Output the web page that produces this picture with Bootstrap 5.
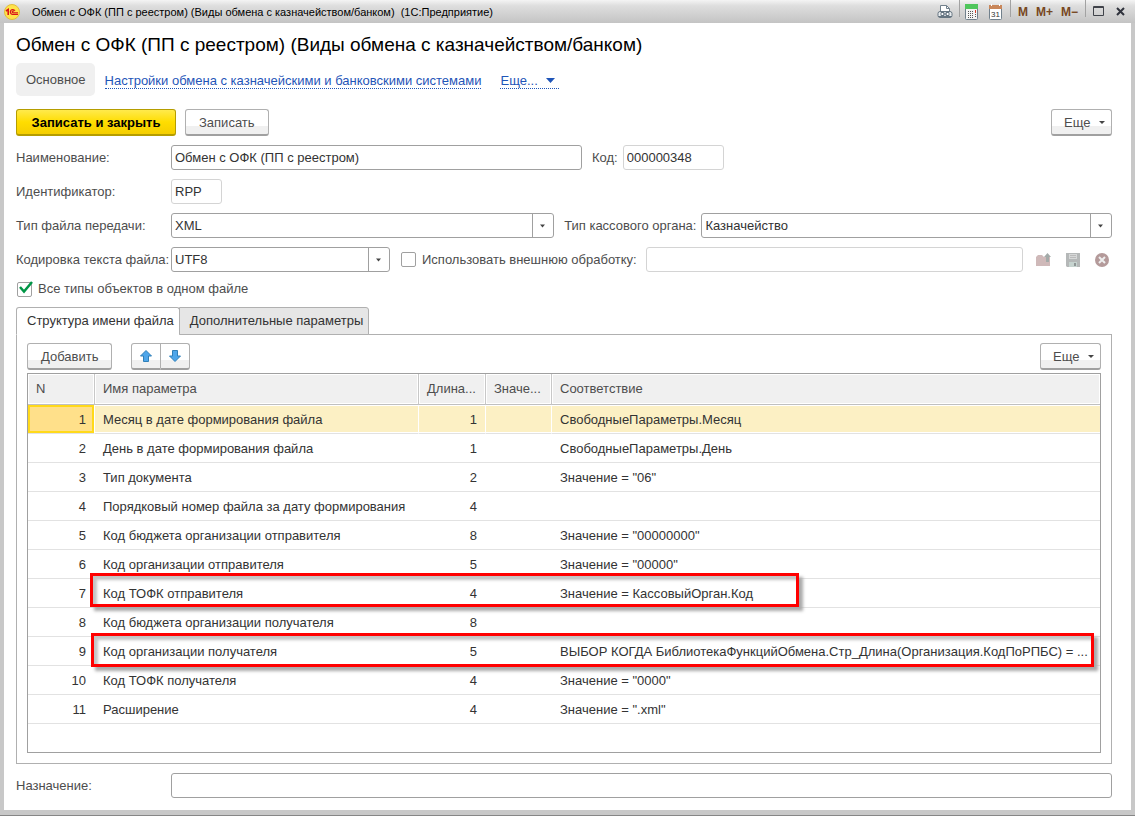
<!DOCTYPE html>
<html lang="ru">
<head>
<meta charset="utf-8">
<meta name="viewport" content="width=device-width, initial-scale=1">
<title>Обмен с ОФК (ПП с реестром)</title>
<link href="https://cdn.jsdelivr.net/npm/bootstrap@5.3.0/dist/css/bootstrap.min.css" rel="stylesheet">
<style>
body{font:13px/16px "Liberation Sans",Arial,sans-serif;color:#4d4d4d;background:#c8c8c8}
.app-window{padding:0 4px 5px;border-bottom:1px solid #868686}
.title-bar{height:23px;margin:0 -4px;padding:0 10px 0 4px;color:#000;font-size:11px;background:linear-gradient(#f4f4f4,#dedede 25%,#c4c4c4)}
.title-bar button{border:0;background:none;padding:0;display:flex;align-items:center}
.title-bar svg,.icon-btn svg,.move svg{display:block}
.title-bar .mem{font-weight:700;font-size:12px;color:#774721}
.title-bar .sep{width:1px;height:17px;background:#a2a2a2;align-self:flex-start;margin:0 7px}
.title-bar .sep-tight{margin:0 3px 0 6px}
.mem-set{gap:8px}
.form-page{background:#fff;padding:10px 19px 12px 12px}
.page-title{font-size:19px;line-height:24px;color:#000;margin:0 0 6px}
.nav-pill{background:#f0f0f0;border-radius:5px;color:#4d4d4d;padding:9px 9px 8px 10px;text-decoration:none}
.nav-ref{color:#1f55b8;text-decoration:none;border-bottom:1px dotted #1f55b8;line-height:15px;margin:2px 9px 0 10px}
.commands{margin-top:13px;gap:9px}
.cmd{height:27px;font-size:13px;line-height:16px;padding:1px 13px 0;color:#4d4d4d;border:1px solid #b0b0b0;border-bottom:2px solid #a0a0a0;border-radius:3px;background:linear-gradient(#fff 65%,#f0f0f0 66%)}
.cmd:hover{border-color:#a0a0a0;color:#333}
.cmd-main{min-width:160px;font-weight:700;color:#000;border-color:#b59d00;background:linear-gradient(#ffea4d,#ffdd00 50%,#f5ce00)}
.cmd-more{min-width:61px;padding:1px 6px 0 12px;display:flex;align-items:center;justify-content:space-between}
.form-fields{gap:9px;margin-top:9px}
.lbl{flex:0 0 155px;white-space:nowrap}
.gap-lbl{margin:0 5px 0 10px;white-space:nowrap}
.field{height:25px;min-width:0;padding:0 3px;border:1px solid #a0a0a0;border-radius:3px;color:#333;background-color:#fff}
.field.soft{border-color:#d4d4d4}
.field-name{flex:0 1 411px}
.field-code{width:101px}
.field-id{width:51px}
.field-enc{width:219px}
.combo{appearance:none;background:url("data:image/svg+xml,%3Csvg xmlns='http://www.w3.org/2000/svg' width='21' height='23'%3E%3Cpath d='M.5 0v23' stroke='%23a0a0a0'/%3E%3Cpath d='M8 10.500h5l-2.500 3z' fill='%23444'/%3E%3C/svg%3E") right center no-repeat #fff}
.grow-a{flex:383 1 0}
.grow-b{flex:411 1 0}
.tick{appearance:none;width:15px;height:15px;flex:none;margin:0;border:1px solid #a0a0a0;border-radius:2px;background:#fff}
.tick-ext{margin-left:11px}
.tick-lbl{margin:0 9px 0 6px;white-space:nowrap}
.tick-cell{position:relative;display:flex;margin:0 6px 0 1px}
.tick-cell svg{position:absolute;left:2px;top:-2px;pointer-events:none}
.all-types{margin:9px 0 10px}
.file-tools{gap:15px;margin:0 3px 0 13px}
.icon-btn{border:0;background:none;padding:0}
.page-tabs{margin-bottom:-1px;position:relative}
.page-tabs button{height:28px;padding:0 5px 0 10px;border:1px solid #b0b0b0;background:#e6e6e6;color:#333;border-top-right-radius:3px;margin-left:-1px}
.page-tabs button.active{background:#fff;border-bottom-color:#fff;margin-left:0;border-radius:3px 3px 0 0}
.tab-panel{border:1px solid #b0b0b0;padding:8px 10px 10px}
.grid-tools{margin-bottom:3px}
.move{margin-left:19px}
.move .cmd{padding:0 8px}
.grid-box{border:1px solid #a0a0a0;min-height:360px}
.params{width:100%;table-layout:fixed;border-collapse:separate;border-spacing:0;color:#333}
.params th{height:31px;padding:0 8px;font-weight:400;color:#4d4d4d;background:#f0f0f0;border-right:1px solid #c8c8c8;border-bottom:1px solid #c0c0c0;box-shadow:inset 0 0 0 1px #fff;overflow:hidden;white-space:nowrap;text-overflow:ellipsis}
.params th:last-child{border-right:0}
.params td{height:29px;padding:2px 8px 0;border-bottom:1px solid #e2e2e2;white-space:nowrap}
.params td:last-child{overflow:hidden;text-overflow:ellipsis}
.params tr{position:relative}
.params .current td{background:#fcf0c4;border-right:1px solid #fff;box-shadow:inset 0 1px #fff,inset 0 -1px #fff}
.params .current td:first-child{background:#ffe08a;box-shadow:inset 0 0 0 2px #ffd91a}
.params .current td:last-child{border-right:0}
.params td.num{padding-right:9px}
.params .current td.num{padding-right:8px}
.frame{position:absolute;border:3px solid #f00;box-shadow:4px 4px 3px #aaa,inset 4px 4px 3px #c4c4c4;pointer-events:none}
.frame-short{left:62px;right:301px;top:-6px;bottom:1px}
.frame-long{left:63px;right:6px;top:-4px;bottom:-1px}
.purpose{margin-top:9px}
</style>
</head>
<body>
<div class="app-window min-vh-100 d-flex flex-column">
<header class="title-bar d-flex align-items-center">
  <svg width="16" height="16" viewBox="0 0 16 16"><circle cx="8" cy="8" r="7.500" fill="#ffe34a" stroke="#e2bd3c"/><path d="M2 7l2.200-1.500v5.500" fill="none" stroke="#d8151a" stroke-width="1.600"/><path d="M11 6.800a2.500 2.500 0 1 0-2.500 3.700H14M10 7.300a1 1 0 1 0-1.200 1.500H14" fill="none" stroke="#d8151a" stroke-width="1.200"/></svg>
  <span class="ms-2 ps-1 me-auto text-truncate">Обмен с ОФК (ПП с реестром) (Виды обмена с казначейством/банком)&nbsp; (1С:Предприятие)</span>
  <button aria-label="Печать"><svg width="16" height="16" viewBox="0 0 16 16"><path d="M3.500 8V1.500h6l3 3V8" fill="#fff" stroke="#71808c"/><path d="M9.500 1.500v3h3" fill="none" stroke="#71808c"/><rect x="1" y="7.500" width="14" height="6" rx="2" fill="#e9edf0" stroke="#667581"/><path d="M4 8.500h3v3H4zM9 8.500h3v3H9zM1 12.500h14M6 10h4" fill="#fff" stroke="#667581"/></svg></button>
  <span class="sep sep-tight"></span>
  <button aria-label="Калькулятор"><svg width="16" height="16" viewBox="0 0 16 16"><rect x="2.500" y=".5" width="12" height="15" rx="1" fill="#f4f4f4" stroke="#71808c"/><path d="M2 0h13v5H2z" fill="#4fc65c"/><path d="M5 7.500h6M5 9.500h6M5 11.500h6M5 13.500h6" stroke="#555" stroke-dasharray="1 1"/><path d="M12.500 6v3" stroke="#d8432e"/><path d="M12.500 10v4" stroke="#555" stroke-dasharray="1 1"/></svg></button>
  <button class="ms-2" aria-label="Календарь"><svg width="16" height="16" viewBox="0 0 16 16"><rect x="2.500" y="1.500" width="12" height="14" rx="1" fill="#fff" stroke="#71808c"/><path d="M2 1h13v4H2z" fill="#c9875b"/><path d="M4.500 0v2M12.500 0v2" stroke="#fff"/><text x="8.500" y="13" font-size="8" text-anchor="middle" fill="#333">31</text></svg></button>
  <span class="sep"></span>
  <span class="mem-set d-flex"><button class="mem">M</button><button class="mem">M+</button><button class="mem">M−</button></span>
  <span class="sep"></span>
  <button aria-label="Развернуть"><svg width="11" height="11" viewBox="0 0 11 11"><path d="M.5 .5h10v9H.5zM1 1.500h9" fill="none" stroke="#40434a"/></svg></button>
  <button class="ms-2 ps-1" aria-label="Закрыть"><svg width="9" height="9" viewBox="0 0 9 9"><path d="M1 1l7 7M8 1L1 8" stroke="#30333d" stroke-width="2"/></svg></button>
</header>

<main class="form-page flex-grow-1 d-flex flex-column">
  <h1 class="page-title">Обмен с ОФК (ПП с реестром) (Виды обмена с казначейством/банком)</h1>
  <nav class="d-flex align-items-center">
    <a class="nav-pill" href="#">Основное</a>
    <a class="nav-ref" href="#">Настройки обмена с казначейскими и банковскими системами</a>
    <a class="nav-ref" href="#">Еще... <svg class="ms-1" width="14" height="10" viewBox="0 0 14 10"><path d="M1 2h9L5.500 7z" fill="#1f55b8"/></svg></a>
  </nav>
  <div class="commands d-flex">
    <button class="cmd cmd-main">Записать и закрыть</button>
    <button class="cmd">Записать</button>
    <button class="cmd cmd-more ms-auto">Еще <svg width="6" height="4" viewBox="0 0 6 4"><path d="M0 0h6L3 3z" fill="#444"/></svg></button>
  </div>

  <div class="form-fields d-grid">
    <div class="d-flex align-items-center">
      <label class="lbl" for="f-name">Наименование:</label>
      <input class="field field-name" id="f-name" value="Обмен с ОФК (ПП с реестром)">
      <label class="gap-lbl" for="f-code">Код:</label>
      <input class="field soft field-code" id="f-code" value="000000348">
    </div>
    <div class="d-flex align-items-center">
      <label class="lbl" for="f-id">Идентификатор:</label>
      <input class="field soft field-id" id="f-id" value="RPP">
    </div>
    <div class="d-flex align-items-center">
      <label class="lbl" for="f-type">Тип файла передачи:</label>
      <select class="field combo grow-a" id="f-type"><option>XML</option></select>
      <label class="gap-lbl" for="f-organ">Тип кассового органа:</label>
      <select class="field combo grow-b" id="f-organ"><option>Казначейство</option></select>
    </div>
    <div class="d-flex align-items-center">
      <label class="lbl" for="f-enc">Кодировка текста файла:</label>
      <select class="field combo field-enc" id="f-enc"><option>UTF8</option></select>
      <input class="tick tick-ext" type="checkbox" id="f-ext">
      <label class="tick-lbl" for="f-ext">Использовать внешнюю обработку:</label>
      <input class="field soft flex-grow-1" id="f-extname" aria-label="Внешняя обработка" disabled>
      <div class="file-tools d-flex">
        <button class="icon-btn" aria-label="Загрузить" disabled><svg width="15" height="14" viewBox="0 0 15 14"><path d="M0 4l2-2h4l2 2h6v9H0z" fill="#cfb9b9"/><path d="M11.500 0L15 4h-2v5h-3V4H8z" fill="#a3aaa8"/></svg></button>
        <button class="icon-btn" aria-label="Сохранить" disabled><svg width="14" height="14" viewBox="0 0 14 14"><path d="M0 0h14v14H1l-1-1z" fill="#b5b8b8"/><path d="M3 1h8v5H3z" fill="#d6d8d8"/><path d="M4 2.500h6M4 4.500h6" stroke="#bbb"/><path d="M3 9h8v5H3z" fill="#c6d3cf"/><path d="M8 10h2v3H8z" fill="#8f9696"/></svg></button>
        <button class="icon-btn" aria-label="Очистить" disabled><svg width="14" height="14" viewBox="0 0 14 14"><circle cx="7" cy="7" r="7" fill="#b49a9a"/><path d="M4 4l6 6M10 4l-6 6" stroke="#eee" stroke-width="2"/></svg></button>
      </div>
    </div>
  </div>

  <div class="all-types d-flex align-items-center">
    <span class="tick-cell"><input class="tick" type="checkbox" id="f-all" checked><svg width="15" height="15" viewBox="0 0 15 15"><path d="M1 7l4 4.500L13 2" fill="none" stroke="#009646" stroke-width="2.500"/></svg></span>
    <label for="f-all">Все типы объектов в одном файле</label>
  </div>

  <div class="page-tabs d-flex" role="tablist">
    <button class="active" role="tab" aria-selected="true">Структура имени файла</button>
    <button role="tab" aria-selected="false">Дополнительные параметры</button>
  </div>
  <section class="tab-panel flex-grow-1 d-flex flex-column">
    <div class="grid-tools d-flex">
      <button class="cmd">Добавить</button>
      <div class="btn-group move" role="group">
        <button class="cmd rounded-end-0" aria-label="Вверх"><svg width="12" height="12" viewBox="0 0 12 12"><path d="M6 .5L11.500 6H8.500v5.500h-5V6H.5z" fill="#4ea6ea" stroke="#2f7fb8"/></svg></button>
        <button class="cmd rounded-start-0 border-start-0" aria-label="Вниз"><svg width="12" height="12" viewBox="0 0 12 12"><path d="M6 11.500L11.500 6H8.500V.5h-5V6H.5z" fill="#4ea6ea" stroke="#2f7fb8"/></svg></button>
      </div>
      <button class="cmd cmd-more ms-auto">Еще <svg width="6" height="4" viewBox="0 0 6 4"><path d="M0 0h6L3 3z" fill="#444"/></svg></button>
    </div>
    <div class="grid-box flex-grow-1">
      <table class="params">
        <colgroup><col width="67"><col width="324"><col width="67"><col width="66"><col></colgroup>
        <thead><tr><th>N</th><th>Имя параметра</th><th>Длина...</th><th>Значе...</th><th>Соответствие</th></tr></thead>
        <tbody>
          <tr class="current"><td class="num text-end">1</td><td>Месяц в дате формирования файла</td><td class="num text-end">1</td><td></td><td>СвободныеПараметры.Месяц</td></tr>
          <tr><td class="num text-end">2</td><td>День в дате формирования файла</td><td class="num text-end">1</td><td></td><td>СвободныеПараметры.День</td></tr>
          <tr><td class="num text-end">3</td><td>Тип документа</td><td class="num text-end">2</td><td></td><td>Значение = "06"</td></tr>
          <tr><td class="num text-end">4</td><td>Порядковый номер файла за дату формирования</td><td class="num text-end">4</td><td></td><td></td></tr>
          <tr><td class="num text-end">5</td><td>Код бюджета организации отправителя</td><td class="num text-end">8</td><td></td><td>Значение = "00000000"</td></tr>
          <tr><td class="num text-end">6</td><td>Код организации отправителя</td><td class="num text-end">5</td><td></td><td>Значение = "00000"</td></tr>
          <tr><td class="num text-end">7</td><td>Код ТОФК отправителя<span class="frame frame-short"></span></td><td class="num text-end">4</td><td></td><td>Значение = КассовыйОрган.Код</td></tr>
          <tr><td class="num text-end">8</td><td>Код бюджета организации получателя</td><td class="num text-end">8</td><td></td><td></td></tr>
          <tr><td class="num text-end">9</td><td>Код организации получателя<span class="frame frame-long"></span></td><td class="num text-end">5</td><td></td><td>ВЫБОР КОГДА БиблиотекаФункцийОбмена.Стр_Длина(Организация.КодПоРПБС) = ...</td></tr>
          <tr><td class="num text-end">10</td><td>Код ТОФК получателя</td><td class="num text-end">4</td><td></td><td>Значение = "0000"</td></tr>
          <tr><td class="num text-end">11</td><td>Расширение</td><td class="num text-end">4</td><td></td><td>Значение = ".xml"</td></tr>
        </tbody>
      </table>
    </div>
  </section>
  <div class="purpose d-flex align-items-center">
    <label class="lbl" for="f-purpose">Назначение:</label>
    <input class="field flex-grow-1" id="f-purpose">
  </div>
</main>
</div>
<script src="https://cdn.jsdelivr.net/npm/bootstrap@5.3.0/dist/js/bootstrap.bundle.min.js"></script>
</body>
</html>
